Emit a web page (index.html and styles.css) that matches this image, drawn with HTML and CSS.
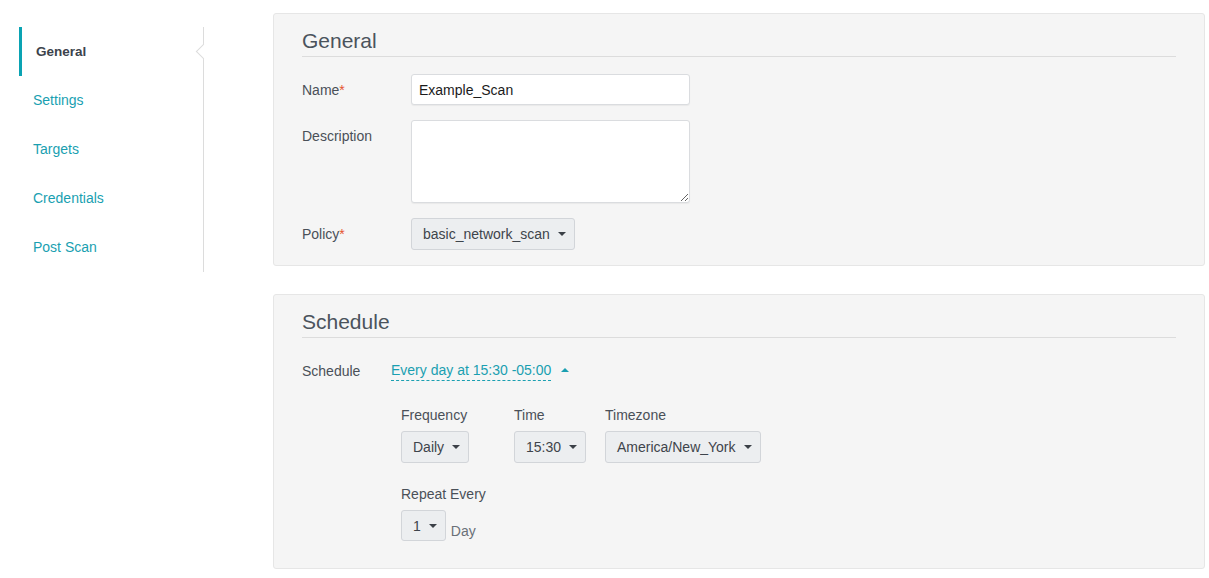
FILE: index.html
```html
<!DOCTYPE html>
<html lang="en">
<head>
<meta charset="utf-8">
<title>Scan</title>
<link rel="stylesheet" href="styles.css">
</head>
<body>
<div class="page">
  <nav class="nav">
    <a class="nav-item active">General</a>
    <a class="nav-item">Settings</a>
    <a class="nav-item">Targets</a>
    <a class="nav-item">Credentials</a>
    <a class="nav-item">Post Scan</a>
  </nav>
  <main class="main">
    <section class="panel">
      <h2 class="panel-title">General</h2>
      <div class="form">
        <div class="row">
          <label class="label">Name<span class="req">*</span></label>
          <input class="input" type="text" value="Example_Scan">
        </div>
        <div class="row">
          <label class="label">Description</label>
          <textarea class="textarea"></textarea>
        </div>
        <div class="row last">
          <label class="label">Policy<span class="req">*</span></label>
          <div class="select"><span>basic_network_scan</span><i class="caret"></i></div>
        </div>
      </div>
    </section>
    <section class="panel panel-schedule">
      <h2 class="panel-title">Schedule</h2>
      <div class="sched-row">
        <span class="label sched-label">Schedule</span>
        <a class="sched-link">Every day at 15:30 -05:00</a>
        <i class="caret-up"></i>
      </div>
      <div class="sched-detail">
        <div class="fields">
          <div class="field f-freq">
            <div class="field-label">Frequency</div>
            <div class="select"><span>Daily</span><i class="caret"></i></div>
          </div>
          <div class="field f-time">
            <div class="field-label">Time</div>
            <div class="select"><span>15:30</span><i class="caret"></i></div>
          </div>
          <div class="field">
            <div class="field-label">Timezone</div>
            <div class="select"><span>America/New_York</span><i class="caret"></i></div>
          </div>
        </div>
        <div class="field repeat">
          <div class="field-label">Repeat Every</div>
          <div class="repeat-row">
            <div class="select small"><span>1</span><i class="caret"></i></div>
            <span class="unit">Day</span>
          </div>
        </div>
      </div>
    </section>
  </main>
</div>
</body>
</html>
```

FILE: styles.css
```css
* { box-sizing: border-box; }
html, body { margin: 0; padding: 0; background: #fff; }
body {
  font-family: "Liberation Sans", Arial, sans-serif;
  font-size: 14px;
  color: #4a5058;
}
.page {
  display: flex;
  align-items: flex-start;
  padding-top: 13px;
}
.nav {
  margin-top: 14px;
  margin-left: 19px;
  width: 185px;
  border-right: 1px solid #dcdcdc;
  display: flex;
  flex-direction: column;
}
.nav-item {
  position: relative;
  display: block;
  height: 49px;
  line-height: 49px;
  padding-left: 14px;
  color: #1a9fb1;
  text-decoration: none;
}
.nav-item.active {
  border-left: 3px solid #0aa3b3;
  color: #3c434c;
  font-weight: bold;
  font-size: 13.5px;
}
.nav-item.active::after {
  content: "";
  position: absolute;
  right: -6px;
  top: 19px;
  width: 10px;
  height: 10px;
  background: #fff;
  border-left: 1px solid #dcdcdc;
  border-bottom: 1px solid #dcdcdc;
  transform: rotate(45deg);
}
.main {
  margin-left: 69px;
  width: 932px;
  display: flex;
  flex-direction: column;
}
.panel {
  background: #f5f5f5;
  border: 1px solid #e6e6e6;
  border-radius: 3px;
  padding: 15px 28px 15px;
}
.panel-schedule {
  margin-top: 28px;
  padding-bottom: 27px;
}
.panel-title {
  margin: 0;
  font-size: 21px;
  font-weight: normal;
  line-height: 24px;
  color: #4b535c;
  padding-bottom: 3px;
  border-bottom: 1px solid #dcdcdc;
}
.form { margin-top: 17px; }
.row {
  display: flex;
  align-items: flex-start;
  margin-bottom: 15px;
}
.row.last { margin-bottom: 0; }
.label {
  width: 109px;
  flex: none;
  padding-top: 6px;
  line-height: 20px;
  color: #4a5058;
}
.req { color: #e5532f; }
.input, .textarea {
  width: 279px;
  border: 1px solid #dadcdf;
  border-radius: 3px;
  background: #fff;
  font-family: "Liberation Sans", Arial, sans-serif;
  font-size: 14px;
  color: #1b1b1b;
  box-shadow: 0 1px 1px rgba(0,0,0,0.05);
  outline: none;
}
.input { height: 31px; padding: 0 7px; }
.textarea { height: 83px; padding: 6px 7px; resize: vertical; display: block; }
.select {
  display: inline-flex;
  align-items: center;
  height: 32px;
  padding: 0 8px 0 11px;
  background: #eceef0;
  border: 1px solid #d2d5d9;
  border-radius: 3px;
  color: #3e444b;
  white-space: nowrap;
}
.select.small { height: 31px; }
.caret {
  display: inline-block;
  width: 0;
  height: 0;
  margin-left: 8px;
  border-left: 4px solid transparent;
  border-right: 4px solid transparent;
  border-top: 4px solid #3b4047;
}
.sched-row {
  display: flex;
  align-items: center;
  margin-top: 22px;
  line-height: 20px;
}
.sched-label { width: 89px; padding-top: 0; }
.sched-link {
  color: #1a9fb1;
  line-height: 20px;
  border-bottom: 1px dashed #1a9fb1;
}
.caret-up {
  display: inline-block;
  width: 0;
  height: 0;
  margin-left: 10px;
  margin-top: -2px;
  border-left: 4px solid transparent;
  border-right: 4px solid transparent;
  border-bottom: 4px solid #1a9fb1;
}
.sched-detail {
  margin-top: 24px;
  padding-left: 99px;
}
.fields { display: flex; }
.field-label {
  line-height: 20px;
  margin-bottom: 6px;
  color: #4a5058;
}
.f-freq { width: 113px; }
.f-time { width: 91px; }
.repeat { margin-top: 21px; }
.repeat-row {
  display: flex;
  align-items: flex-end;
}
.unit {
  margin-left: 5px;
  line-height: 20px;
  color: #6a7078;
}
```
